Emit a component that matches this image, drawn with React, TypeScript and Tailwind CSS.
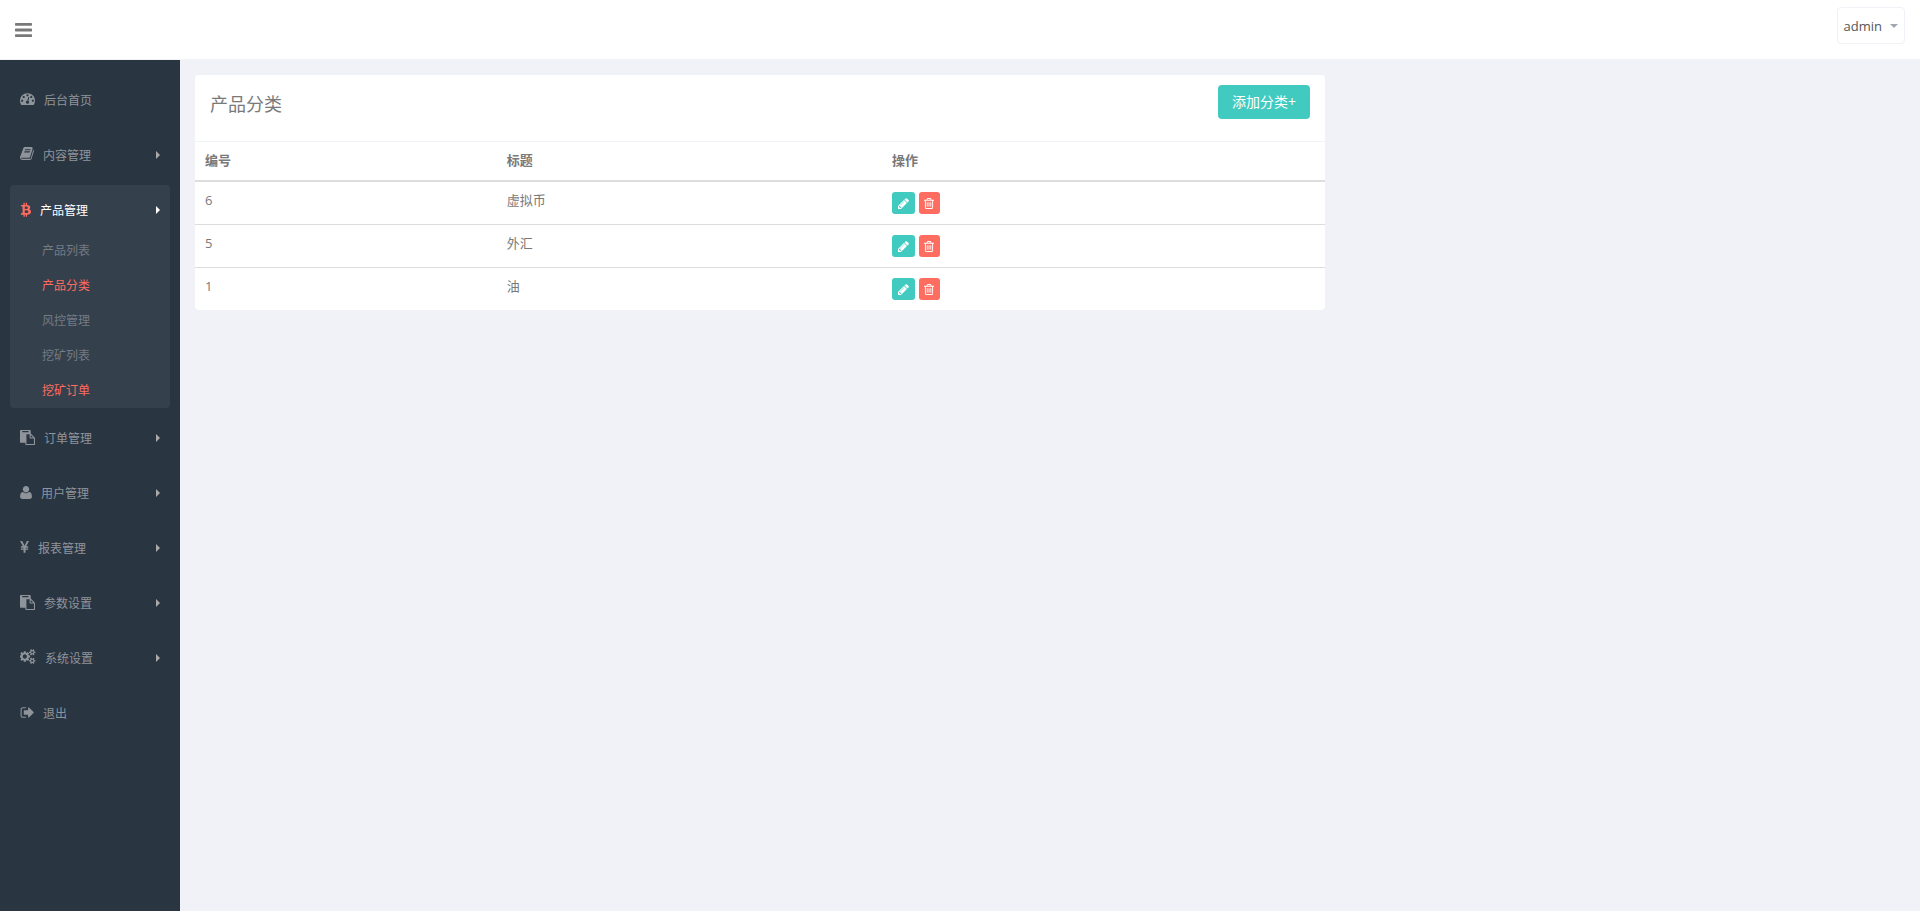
import { ReactNode } from "react";

interface IconProps {
  box: string;
  d: string;
  className: string;
}

function Icon({ box, d, className }: IconProps) {
  return (
    <svg viewBox={box} className={`shrink-0 ${className}`} fill="currentColor" aria-hidden="true">
      <path d={d} />
    </svg>
  );
}

const paths = {
  bars: "M1664 1344v128q0 26-19 45t-45 19h-1408q-26 0-45-19t-19-45v-128q0-26 19-45t45-19h1408q26 0 45 19t19 45zm0-512v128q0 26-19 45t-45 19h-1408q-26 0-45-19t-19-45v-128q0-26 19-45t45-19h1408q26 0 45 19t19 45zm0-512v128q0 26-19 45t-45 19h-1408q-26 0-45-19t-19-45v-128q0-26 19-45t45-19h1408q26 0 45 19t19 45z",
  dashboard:
    "M384 1152q0-53-37.5-90.5t-90.5-37.5-90.5 37.5-37.5 90.5 37.5 90.5 90.5 37.5 90.5-37.5 37.5-90.5zm192-448q0-53-37.5-90.5t-90.5-37.5-90.5 37.5-37.5 90.5 37.5 90.5 90.5 37.5 90.5-37.5 37.5-90.5zm428 481l101-382q6-26-7.5-48.5t-38.5-29.5-48 6.5-30 39.5l-101 382q-60 5-107 43.5t-63 98.5q-20 77 20 146t117 89 146-20 89-117q16-60-6-117t-72-91zm660-33q0-53-37.5-90.5t-90.5-37.5-90.5 37.5-37.5 90.5 37.5 90.5 90.5 37.5 90.5-37.5 37.5-90.5zm-640-640q0-53-37.5-90.5t-90.5-37.5-90.5 37.5-37.5 90.5 37.5 90.5 90.5 37.5 90.5-37.5 37.5-90.5zm448 192q0-53-37.5-90.5t-90.5-37.5-90.5 37.5-37.5 90.5 37.5 90.5 90.5 37.5 90.5-37.5 37.5-90.5zm320 448q0 261-141 483-19 29-54 29h-1402q-35 0-54-29-141-221-141-483 0-182 71-348t191-286 286-191 348-71 348 71 286 191 191 286 71 348z",
  book: "M1703 478q40 57 18 129l-275 906q-19 64-76.5 107.5t-122.5 43.5h-923q-77 0-148.5-53.5t-99.5-131.5q-24-67-2-127 0-4 3-27t4-37q1-8-3-21.5t-3-19.5q2-11 8-21t16.5-23.5 16.5-23.5q23-38 45-91.5t30-91.5q3-10 .5-30t-.5-28q3-11 17-28t17-23q21-36 42-92t25-90q1-9-2.5-32t.5-28q4-13 22-30.5t22-22.5q19-26 42.5-84.5t27.5-96.5q1-8-3-25.5t-2-26.5q2-8 9-18t18-23 17-21q8-12 16.5-30.5t15-35 16-36 19.5-32 26.5-23.5 36-11.5 47.5 5.5l-1 3q38-9 51-9h761q74 0 114 56t18 130l-274 906q-36 119-71.5 153.5t-128.5 34.5h-869q-27 0-38 15-11 16-1 43 24 70 144 70h923q29 0 56-15.5t35-41.5l300-987q7-22 5-57 38 15 59 43zm-1064 2q-4 13 2 22.5t20 9.5h608q13 0 25.5-9.5t16.5-22.5l21-64q4-13-2-22.5t-20-9.5h-608q-13 0-25.5 9.5t-16.5 22.5zm-83 256q-4 13 2 22.5t20 9.5h608q13 0 25.5-9.5t16.5-22.5l21-64q4-13-2-22.5t-20-9.5h-608q-13 0-25.5 9.5t-16.5 22.5z",
  bitcoin:
    "M1217 613q18 182-131 258 117 28 175 103t45 214q-7 71-32.5 125t-64.5 89-97 58.5-121.5 34.5-145.5 15v255h-154v-251q-80 0-122-1v252h-154v-255q-18 0-54-.5t-55-.5h-200l31-183h111q50 0 58-51v-402h16q-6-1-16-1v-287q-13-68-89-68h-111v-164l212 1q64 0 97-1v-252h154v247q82-2 122-2v-245h154v252q79 7 140 22.5t113 45 82.5 78 36.5 114.5zm-215 545q0-36-15-64t-37-46-57.5-30.5-65.5-18.5-74-9-69-3-64.5 1-47.5 1v338q8 0 37 .5t48 .5 53-1.5 58.5-4 57-8.5 55.5-14 47.5-21 39.5-30 24.5-40 9.5-51zm-71-476q0-33-12.5-58.5t-30.5-42-48-28-55-16.5-61.5-8-58-2.5-54 1-39.5.5v307q5 0 34.5.5t46.5 0 50-2 55-5.5 51.5-11 48.5-18.5 37-27 27-38.5 9-51z",
  paste:
    "M768 1664h896v-640h-416q-40 0-68-28t-28-68v-416h-384v1152zm256-1440v-64q0-13-9.5-22.5t-22.5-9.5h-704q-13 0-22.5 9.5t-9.5 22.5v64q0 13 9.5 22.5t22.5 9.5h704q13 0 22.5-9.5t9.5-22.5zm256 672h299l-299-299v299zm512 128v672q0 40-28 68t-68 28h-960q-40 0-68-28t-28-68v-160h-544q-40 0-68-28t-28-68v-1344q0-40 28-68t68-28h1088q40 0 68 28t28 68v328q21 13 36 28l408 408q28 28 48 76t20 88z",
  user: "M1600 1405q0 120-73 189.5t-194 69.5h-874q-121 0-194-69.5t-73-189.5q0-53 3.5-103.5t14-109 26.5-108.5 43-97.5 62-81 85.5-53.5 111.5-20q9 0 42 21.5t74.5 48 108 48 133.5 21.5 133.5-21.5 108-48 74.5-48 42-21.5q61 0 111.5 20t85.5 53.5 62 81 43 97.5 26.5 108.5 14 109 3.5 103.5zm-320-893q0 159-112.5 271.5t-271.5 112.5-271.5-112.5-112.5-271.5 112.5-271.5 271.5-112.5 271.5 112.5 112.5 271.5z",
  yen: "M985.5 1536h-172q-13 0-22.5-9t-9.5-23v-330h-288q-13 0-22.5-9t-9.5-23v-103q0-13 9.5-22.5t22.5-9.5h288v-85h-288q-13 0-22.5-9t-9.5-23v-104q0-13 9.5-22.5t22.5-9.5h214l-321-578q-8-16 0-32 10-16 28-16h194q19 0 29 18l215 425q19 38 56 125 10-24 30.5-68t27.5-61l191-420q8-19 29-19h191q17 0 27 16 9 14 1 31l-313 579h215q13 0 22.5 9.5t9.5 22.5v104q0 14-9.5 23t-22.5 9h-290v85h290q13 0 22.5 9.5t9.5 22.5v103q0 14-9.5 23t-22.5 9h-290v330q0 13-9.5 22.5t-22.5 9.5z",
  cogs: "M832 896q0-106-75-181t-181-75-181 75-75 181 75 181 181 75 181-75 75-181zm768 512q0-52-38-90t-90-38-90 38-38 90q0 53 37.5 90.5t90.5 37.5 90.5-37.5 37.5-90.5zm0-1024q0-52-38-90t-90-38-90 38-38 90q0 53 37.5 90.5t90.5 37.5 90.5-37.5 37.5-90.5zm-384 421v185q0 10-7 19.5t-16 10.5l-155 24q-11 35-32 76 34 48 90 115 7 10 7 20 0 12-7 19-23 30-82.5 89.5t-78.5 59.5q-11 0-21-7l-115-90q-37 19-77 31-11 108-23 155-7 24-30 24h-186q-11 0-20-7.5t-10-17.5l-23-153q-34-10-75-31l-118 89q-7 7-20 7-11 0-21-8-144-133-144-160 0-9 7-19 10-14 41-53t47-61q-23-44-35-82l-152-24q-10-1-17-9.5t-7-19.5v-185q0-10 7-19.5t16-10.5l155-24q11-35 32-76-34-48-90-115-7-11-7-20 0-12 7-20 22-30 82-89t79-59q11 0 21 7l115 90q34-18 77-32 11-108 23-154 7-24 30-24h186q11 0 20 7.5t10 17.5l23 153q34 10 75 31l118-89q8-7 20-7 11 0 21 8 144 133 144 160 0 9-7 19-12 16-42 54t-45 60q23 48 34 82l152 23q10 2 17 10.5t7 19.5zm640 533v140q0 16-149 31-12 27-30 52 51 113 51 138 0 4-4 7-122 71-124 71-8 0-46-47t-52-68q-20 2-30 2t-30-2q-14 21-52 68t-46 47q-2 0-124-71-4-3-4-7 0-25 51-138-18-25-30-52-149-15-149-31v-140q0-16 149-31 13-29 30-52-51-113-51-138 0-4 4-7 4-2 35-20t59-34 30-16q8 0 46 46.5t52 67.5q20-2 30-2t30 2q51-71 92-112l6-2q4 0 124 70 4 3 4 7 0 25-51 138 17 23 30 52 149 15 149 31zm0-1024v140q0 16-149 31-12 27-30 52 51 113 51 138 0 4-4 7-122 71-124 71-8 0-46-47t-52-68q-20 2-30 2t-30-2q-14 21-52 68t-46 47q-2 0-124-71-4-3-4-7 0-25 51-138-18-25-30-52-149-15-149-31v-140q0-16 149-31 13-29 30-52-51-113-51-138 0-4 4-7 4-2 35-20t59-34 30-16q8 0 46 46.5t52 67.5q20-2 30-2t30 2q51-71 92-112l6-2q4 0 124 70 4 3 4 7 0 25-51 138 17 23 30 52 149 15 149 31z",
  signOut:
    "M704 1440q0 4 1 20t.5 26.5-3 23.5-10 19.5-20.5 6.5h-320q-119 0-203.5-84.5t-84.5-203.5v-704q0-119 84.5-203.5t203.5-84.5h320q13 0 22.5 9.5t9.5 22.5q0 4 1 20t.5 26.5-3 23.5-10 19.5-20.5 6.5h-320q-66 0-113 47t-47 113v704q0 66 47 113t113 47h312l11.5 1 11.5 3 8 5.5 7 9 2 13.5zm928-544q0 26-19 45l-544 544q-19 19-45 19t-45-19-19-45v-288h-448q-26 0-45-19t-19-45v-384q0-26 19-45t45-19h448v-288q0-26 19-45t45-19 45 19l544 544q19 19 19 45z",
  pencil:
    "M491 1536l91-91-235-235-91 91v107h128v128h107zm523-928q0-22-22-22-10 0-17 7l-542 542q-7 7-7 17 0 22 22 22 10 0 17-7l542-542q7-7 7-17zm-54-192l416 416-832 832h-416v-416zm683 96q0 53-37 90l-166 166-416-416 166-165q36-38 90-38 53 0 91 38l235 234q37 39 37 91z",
  trash:
    "M704 736v576q0 14-9 23t-23 9h-64q-14 0-23-9t-9-23v-576q0-14 9-23t23-9h64q14 0 23 9t9 23zm256 0v576q0 14-9 23t-23 9h-64q-14 0-23-9t-9-23v-576q0-14 9-23t23-9h64q14 0 23 9t9 23zm256 0v576q0 14-9 23t-23 9h-64q-14 0-23-9t-9-23v-576q0-14 9-23t23-9h64q14 0 23 9t9 23zm128 724v-948h-896v948q0 22 7 40.5t14.5 27 10.5 8.5h832q3 0 10.5-8.5t14.5-27 7-40.5zm-672-1076h448l-48-117q-7-9-17-11h-317q-10 2-17 11zm928 32v64q0 14-9 23t-23 9h-96v948q0 83-47 143.5t-113 60.5h-832q-66 0-113-58.5t-47-141.5v-952h-96q-14 0-23-9t-9-23v-64q0-14 9-23t23-9h309l70-167q15-37 54-63t79-26h320q40 0 79 26t54 63l70 167h309q14 0 23 9t9 23z",
};

interface MenuItem {
  label: string;
  icon: ReactNode;
  children?: { label: string; active?: boolean }[];
  leaf?: boolean;
}

const menu: MenuItem[] = [
  {
    label: "后台首页",
    icon: <Icon box="0 0 1792 1792" d={paths.dashboard} className="w-[15px] h-[15px] mb-[3px]" />,
    leaf: true,
  },
  {
    label: "内容管理",
    icon: <Icon box="64 0 1664 1792" d={paths.book} className="w-[14px] h-[15px] mb-[3px]" />,
  },
  {
    label: "产品管理",
    icon: <Icon box="0 0 1314 1792" d={paths.bitcoin} className="w-[11px] h-[15px] mb-px text-[#ff6c60]" />,
    children: [
      { label: "产品列表" },
      { label: "产品分类", active: true },
      { label: "风控管理" },
      { label: "挖矿列表" },
      { label: "挖矿订单", active: true },
    ],
  },
  {
    label: "订单管理",
    icon: <Icon box="0 0 1792 1792" d={paths.paste} className="w-[15px] h-[15px] mb-px" />,
  },
  {
    label: "用户管理",
    icon: <Icon box="192 0 1408 1792" d={paths.user} className="w-[12px] h-[15px] mb-px" />,
  },
  {
    label: "报表管理",
    icon: <Icon box="382 0 1027 1792" d={paths.yen} className="w-[9px] h-[15px] mb-px" />,
  },
  {
    label: "参数设置",
    icon: <Icon box="0 0 1792 1792" d={paths.paste} className="w-[15px] h-[15px] mb-px" />,
  },
  {
    label: "系统设置",
    icon: <Icon box="0 0 1920 1792" d={paths.cogs} className="w-[16px] h-[15px] mb-[3px]" />,
  },
  {
    label: "退出",
    icon: <Icon box="0 0 1664 1792" d={paths.signOut} className="w-[14px] h-[15px] mb-px" />,
    leaf: true,
  },
];

const rows = [
  { id: 6, title: "虚拟币" },
  { id: 5, title: "外汇" },
  { id: 1, title: "油" },
];

function SidebarItem({ label, icon, children, leaf }: MenuItem) {
  return (
    <li className={`rounded ${children ? "bg-[#35404d]" : ""}`}>
      <a
        href="#"
        className={`flex items-center gap-[9px] px-2.5 ${
          children ? "h-12 pt-0.5 text-white" : "h-[50px] text-[#8f949b]"
        }`}
      >
        {icon}
        <span className="pt-0.5">{label}</span>
        {!leaf && (
          <svg viewBox="0 0 4 8" className="ml-auto w-1 h-2" fill={children ? "#fff" : "#aaa"} aria-hidden="true">
            <path d="M0 0l4 4-4 4z" />
          </svg>
        )}
      </a>
      {children && (
        <ul>
          {children.map((c) => (
            <li key={c.label}>
              <a
                href="#"
                className={`flex items-center h-[35px] pl-8 ${c.active ? "text-[#ff6c60]" : "text-[#737b84]"}`}
              >
                {c.label}
              </a>
            </li>
          ))}
        </ul>
      )}
    </li>
  );
}

export default function App() {
  return (
    <div className="flex flex-col min-h-screen bg-[#f1f2f7] text-[13px] leading-5 text-[#797979] font-['Open_Sans','Noto_Sans_CJK_SC',sans-serif]">
      <header className="flex items-start justify-between h-[60px] pl-[15px] pr-[15px] bg-white border-b border-[#f1f2f7]">
        <button type="button" aria-label="菜单" className="mt-5">
          <Icon box="128 0 1536 1792" d={paths.bars} className="w-[17px] h-5" />
        </button>
        <button
          type="button"
          className="flex items-center gap-2 h-[37px] mt-[7px] px-1.5 pt-px border border-[#f1f2f7] rounded text-[#555]"
        >
          admin
          <svg viewBox="0 0 8 4" className="w-2 h-1" fill="#a1a6b3" aria-hidden="true">
            <path d="M0 0h8L4 4z" />
          </svg>
        </button>
      </header>

      <div className="flex flex-1">
        <nav className="w-[180px] shrink-0 px-2.5 pt-[15px] bg-[#2a3542] text-xs">
          <ul className="flex flex-col gap-[5px]">
            {menu.map((m) => (
              <SidebarItem key={m.label} {...m} />
            ))}
          </ul>
        </nav>

        <main className="flex-1 pt-[15px]">
          <div className="w-2/3 px-[15px]">
            <section className="bg-white rounded overflow-hidden">
              <div className="flex items-start justify-between px-[15px] pt-2.5 pb-[22px] border-b border-[#eff2f7]">
                <h1 className="text-lg leading-[38px] h-[34px]">产品分类</h1>
                <button type="button" className="h-[34px] px-3.5 rounded bg-[#41cac0] text-white text-sm">
                  添加分类+
                </button>
              </div>
              <table className="w-full text-left">
                <thead>
                  <tr className="border-b-2 border-[#ddd]">
                    <th className="w-[26.7%] px-2.5 pt-2 pb-2.5 font-bold">编号</th>
                    <th className="w-[34.1%] px-2.5 pt-2 pb-2.5 font-bold">标题</th>
                    <th className="px-2.5 pt-2 pb-2.5 font-bold">操作</th>
                  </tr>
                </thead>
                <tbody>
                  {rows.map((r) => (
                    <tr key={r.id} className="align-top border-t border-[#ddd]">
                      <td className="px-2.5 pt-2">{r.id}</td>
                      <td className="px-2.5 pt-2">{r.title}</td>
                      <td className="px-2.5 py-2.5">
                        <div className="flex gap-1">
                          <button
                            type="button"
                            aria-label="编辑"
                            className="flex items-center justify-center w-[23px] h-[22px] pt-px rounded-[3px] bg-[#41cac0] text-white"
                          >
                            <Icon box="128 128 1536 1536" d={paths.pencil} className="w-[11px] h-[11px]" />
                          </button>
                          <button
                            type="button"
                            aria-label="删除"
                            className="flex items-center justify-center w-[21px] h-[22px] pt-px pr-px rounded-[3px] bg-[#ff6c60] text-white"
                          >
                            <Icon box="192 128 1408 1536" d={paths.trash} className="w-[10px] h-[11px]" />
                          </button>
                        </div>
                      </td>
                    </tr>
                  ))}
                </tbody>
              </table>
            </section>
          </div>
        </main>
      </div>
    </div>
  );
}
